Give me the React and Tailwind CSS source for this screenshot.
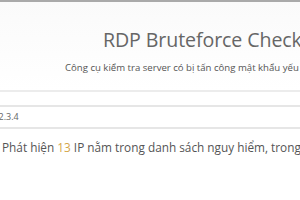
import React from 'react';

const App = () => {
  return (
    <div className="w-[300px] h-[200px] overflow-hidden bg-white text-[#5a5a5a]" style={{ fontFamily: '"Open Sans", "Noto Sans", sans-serif' }}>
      <div className="h-[2px] bg-[#a9a9a9]" />
      <div className="h-[88px] bg-gradient-to-b from-[#fafafa] to-white pl-[103px] pt-[24px] whitespace-nowrap">
        <h1 className="text-[19.6px] leading-[28px] font-normal tracking-[-0.1px] text-[#666]">RDP Bruteforce Checker</h1>
        <p className="mt-[8px] -ml-[38px] text-[9.6px] leading-[12px] text-[#555]">
          Công cụ kiểm tra server có bị tấn công mật khẩu yếu hay không
        </p>
      </div>
      <div className="h-[2px] bg-[#ececec]" />
      <div className="h-[13px]" />
      <div className="h-[24px] border-y-2 border-[#e6e6e6] flex items-center whitespace-nowrap">
        <span className="-ml-[9px] text-[9px] text-[#666]">1.2.3.4</span>
      </div>
      <p className="mt-[10px] pl-[2px] whitespace-nowrap text-[11.8px] leading-[16px] text-[#555]">
        Phát hiện <span className="text-[#d4a64a]">13</span> IP nằm trong danh sách nguy hiểm, trong đó
      </p>
    </div>
  );
};

export default App;
